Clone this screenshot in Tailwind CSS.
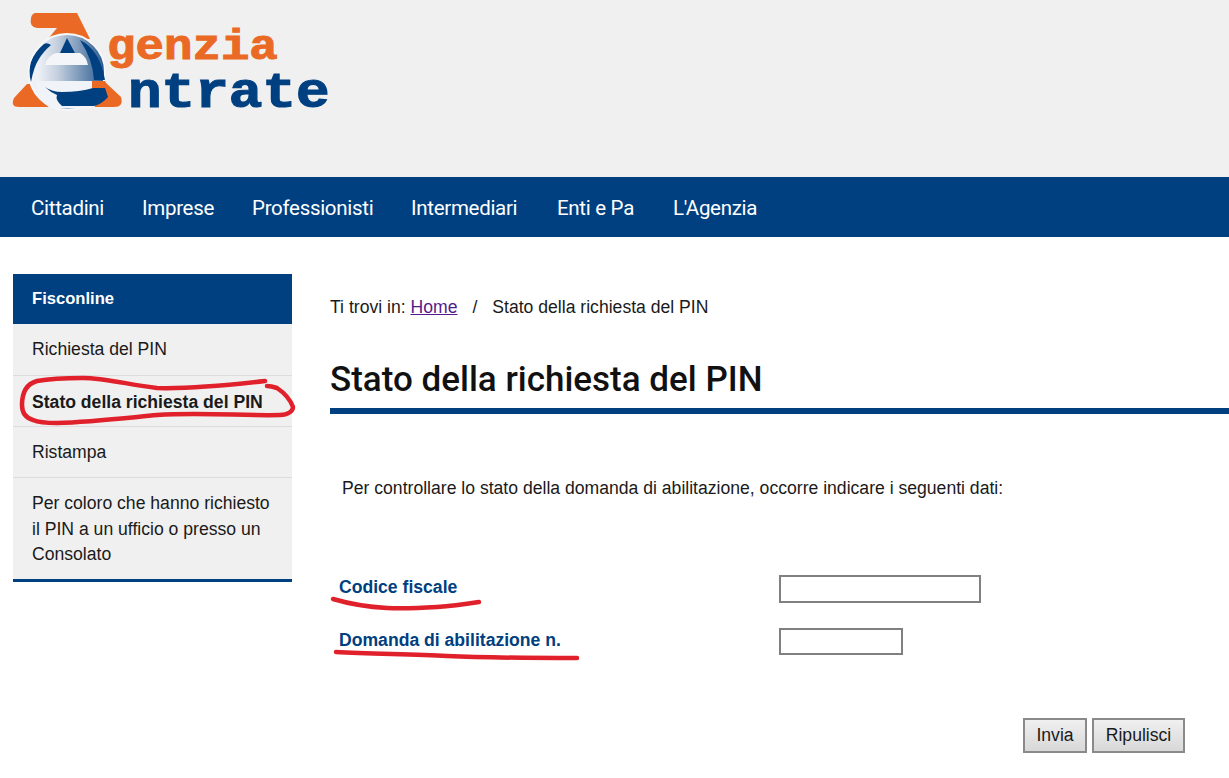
<!DOCTYPE html>
<html lang="it">
<head>
  <meta charset="UTF-8" />
  <meta name="viewport" content="width=device-width, initial-scale=1.0" />
  <title>Stato della richiesta del PIN</title>
  <script src="https://cdn.jsdelivr.net/npm/@tailwindcss/browser@4"></script>
</head>
<body class="relative h-[778px] overflow-hidden bg-white font-['Liberation_Sans',Arial,sans-serif] text-[#1a1a1a]">

  <!-- Header / logo -->
  <header class="h-[177px] bg-[#f0f0f0]">
    <svg width="345" height="135" viewBox="0 0 345 135" class="block">
      <defs>
        <linearGradient id="eGrad" gradientUnits="userSpaceOnUse" x1="38" x2="105" y1="0" y2="0">
          <stop offset="0" stop-color="#eef1f6" />
          <stop offset="0.3" stop-color="#c3cede" />
          <stop offset="1" stop-color="#28598f" />
        </linearGradient>
      </defs>
      <path fill="#ea6a25" d="M36 13H77L90 39H48L57 28H37Q29 27 31 18Q32 13 36 13Z" />
      <path fill="#ea6a25" d="M27 84L14 98Q10 107 19 107H50V84Z" />
      <path fill="#ea6a25" d="M90 82H105L121 97Q124 107 114 107H95Z" />
      <circle cx="67" cy="72" r="38" fill="url(#eGrad)" stroke="#f6f7fa" stroke-width="2" />
      <path fill="#004080" d="M44 44Q25 60 31 82Q34 66 39 59Q43 52 51 45Q47 42 44 44Z" />
      <path fill="#004080" d="M80 40Q100 50 105 80L94 80Q93 60 80 40Z" />
      <path fill="#f4f5f8" d="M45 65Q48 55 56 53H80Q86 56 88 65Z" />
      <path fill="#004080" d="M67 38L75 53H60Z" />
      <path fill="#f0f3f7" d="M36 81H92V108H50Q36 98 36 81Z" />
      <path fill="#ea6a25" d="M92 81H105L109 89H92Z" />
      <path fill="#004080" d="M45 87Q52 92 62 92Q80 92 93 88H105L108 97Q102 104 94 106H62Q55 100 57 95Q50 92 45 87Z" />
      <g fill="#ea6a25" stroke="#ea6a25" stroke-width="1">
        <text transform="translate(107 59) scale(1.13 1)" font-family="Liberation Mono" font-weight="700" font-size="42">genzia</text>
      </g>
      <g fill="#004080" stroke="#004080" stroke-width="1.2">
        <text transform="translate(128 107) scale(1.12 1)" font-family="Liberation Mono" font-weight="700" font-size="50">ntrate</text>
      </g>
    </svg>
  </header>

  <!-- Top nav -->
  <nav class="flex h-[60px] items-center gap-[38px] whitespace-nowrap bg-[#004080] pt-[2px] pl-[31px] font-['Roboto',sans-serif] text-[20.5px] tracking-[-0.3px] text-white">
    <a class="w-[73px]">Cittadini</a>
    <a class="w-[72px]">Imprese</a>
    <a class="w-[121px]">Professionisti</a>
    <a class="w-[108px]">Intermediari</a>
    <a class="w-[78px]">Enti e Pa</a>
    <a class="w-[84px]">L'Agenzia</a>
  </nav>

  <div class="flex pt-[37px]">
    <!-- Sidebar -->
    <aside class="ml-[13px] w-[279px] shrink-0">
      <h2 class="flex h-[50px] items-center bg-[#004080] pt-[1px] pl-[19px] text-[16.6px] font-bold text-white">Fisconline</h2>
      <ul class="border-b-[3px] border-[#004080] bg-[#f0f0f0] text-[17.6px] leading-[25.6px]">
        <li class="flex h-[52px] items-center border-b border-[#dcdcdc] px-[19px]">Richiesta del PIN</li>
        <li class="flex h-[51px] items-center border-b border-[#dcdcdc] px-[19px] pt-[3px] font-bold">Stato della richiesta del PIN</li>
        <li class="flex h-[51px] items-center border-b border-[#dcdcdc] px-[19px] pt-[1px]">Ristampa</li>
        <li class="pt-[13px] pr-[15px] pb-[11px] pl-[19px]">Per coloro che hanno richiesto il PIN a un ufficio o presso un Consolato</li>
      </ul>
    </aside>

    <!-- Main -->
    <main class="ml-[38px] flex-1">
      <p class="mt-[22px] text-[17.6px] leading-[22px]">Ti trovi in: <a class="text-[#551a8b] underline">Home</a><span class="mx-[15px]">/</span>Stato della richiesta del PIN</p>
      <h1 class="mt-[37px] border-b-[6px] border-[#004080] pb-[3px] font-['Roboto',sans-serif] text-[35px] leading-[50px] font-medium text-[#111]">Stato della richiesta del PIN</h1>
      <p class="mt-[63px] ml-[12px] text-[17.6px] leading-[22px]">Per controllare lo stato della domanda di abilitazione, occorre indicare i seguenti dati:</p>

      <form class="mt-[76px]">
        <div class="flex h-[28px] items-center">
          <label class="mb-[4px] ml-[9px] w-[440px] text-[17.6px] font-bold text-[#004080]">Codice fiscale</label>
          <input type="text" class="h-[28px] w-[202px] border-2 border-[#808080] bg-white" />
        </div>
        <div class="mt-[25px] flex h-[27px] items-center">
          <label class="mb-[2px] ml-[9px] w-[440px] text-[17.6px] font-bold text-[#004080]">Domanda di abilitazione n.</label>
          <input type="text" class="h-[27px] w-[124px] border-2 border-[#808080] bg-white" />
        </div>
        <div class="mt-[63px] flex justify-end gap-[5px] pr-[44px]">
          <button type="button" class="h-[35px] w-[64px] border-2 border-[#8a8a8a] bg-gradient-to-b from-[#f0f0f0] to-[#d8d8d8] text-[17.6px]">Invia</button>
          <button type="button" class="h-[35px] w-[93px] border-2 border-[#8a8a8a] bg-gradient-to-b from-[#f0f0f0] to-[#d8d8d8] text-[17.6px]">Ripulisci</button>
        </div>
      </form>
    </main>
  </div>

  <!-- Red pen marks drawn over the page -->
  <svg class="pointer-events-none absolute top-0 left-0" width="1229" height="778" viewBox="0 0 1229 778" fill="none" stroke="#e0202a" stroke-linecap="round" stroke-linejoin="round">
    <path stroke-width="4.5" d="M265 381C230 385 190 389 157 388C130 385 105 378 83 378C65 378 48 379 37 381C26 384 22 394 22 405C22 413 26 418 33 420C40 423 48 423 57 423C90 422 125 418 157 415C200 412 245 416 280 415C288 415 293 411 293 407C290 399 283 392 277 388C274 387 271 386 267 386" />
    <path stroke-width="4.5" d="M333 599C350 604 368 607 387 608C405 609 421 608 437 607C452 606 466 604 479 602" />
    <path stroke-width="4.5" d="M336 652C370 654 410 654 447 656C490 658 535 658 577 658" />
  </svg>
</body>
</html>
